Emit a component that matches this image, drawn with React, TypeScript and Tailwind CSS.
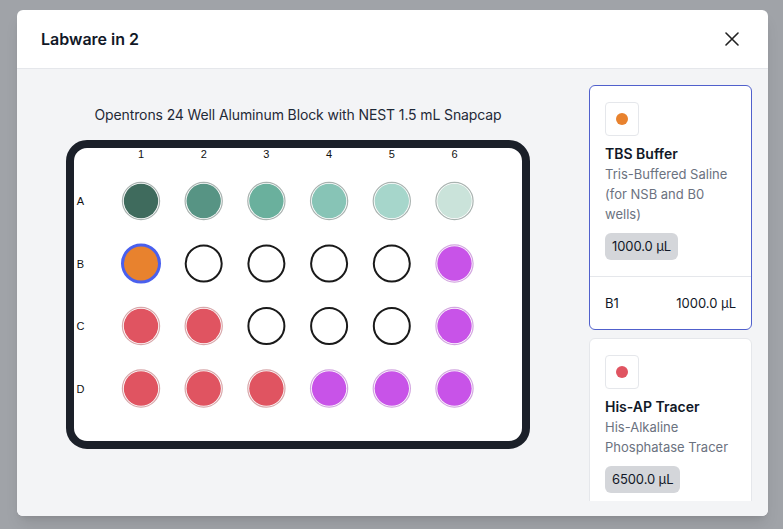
import React from "react";

type Well = { fill?: string; ring?: string; selected?: boolean };

const GREENS = ["#3f6b5d", "#579484", "#6ab09d", "#87c4b6", "#a6d6cb", "#cae3da"];
const ORANGE = "#e8822e";
const RED = "#e05461";
const PURPLE = "#c853e8";

const rows: Well[][] = [
  GREENS.map((g) => ({ fill: g, ring: "#a9b3b0" })),
  [
    { fill: ORANGE, selected: true },
    {},
    {},
    {},
    {},
    { fill: PURPLE, ring: "#d3a7e0" },
  ],
  [
    { fill: RED, ring: "#d8a8ab" },
    { fill: RED, ring: "#d8a8ab" },
    {},
    {},
    {},
    { fill: PURPLE, ring: "#d3a7e0" },
  ],
  [
    { fill: RED, ring: "#d8a8ab" },
    { fill: RED, ring: "#d8a8ab" },
    { fill: RED, ring: "#d8a8ab" },
    { fill: PURPLE, ring: "#d3a7e0" },
    { fill: PURPLE, ring: "#d3a7e0" },
    { fill: PURPLE, ring: "#d3a7e0" },
  ],
];

const CX = [75, 137.7, 200.4, 263.1, 325.8, 388.5];
const CY = [61, 123.5, 186, 248.5];
const ROWS = ["A", "B", "C", "D"];

function Plate() {
  return (
    <svg width="464" height="309" viewBox="0 0 464 309" className="block">
      <rect x="4" y="4" width="456" height="301" rx="17" fill="#ffffff" stroke="#1b2029" strokeWidth="8" />
      {CX.map((x, i) => (
        <text
          key={"c" + i}
          x={x}
          y={18}
          textAnchor="middle"
          fontSize="11"
          fontFamily="'Liberation Sans', Arial, sans-serif"
          fill="#111"
        >
          {i + 1}
        </text>
      ))}
      {ROWS.map((r, i) => (
        <text
          key={"r" + i}
          x={14.5}
          y={CY[i] + 4}
          textAnchor="middle"
          fontSize="11"
          fontFamily="'Liberation Sans', Arial, sans-serif"
          fill="#111"
        >
          {r}
        </text>
      ))}
      {rows.map((row, ri) =>
        row.map((w, ci) => {
          const cx = CX[ci];
          const cy = CY[ri];
          if (!w.fill) {
            return <circle key={ri + "-" + ci} cx={cx} cy={cy} r={18} fill="#fff" stroke="#1a1a1a" strokeWidth="2" />;
          }
          if (w.selected) {
            return (
              <g key={ri + "-" + ci}>
                <circle cx={cx} cy={cy} r={18.5} fill={w.fill} stroke="#4a60ee" strokeWidth="3" />
              </g>
            );
          }
          return (
            <g key={ri + "-" + ci}>
              <circle cx={cx} cy={cy} r={18.6} fill="#fff" stroke={w.ring} strokeWidth="1.2" />
              <circle cx={cx} cy={cy} r={17.2} fill={w.fill} />
            </g>
          );
        })
      )}
    </svg>
  );
}

function Card({
  color,
  title,
  desc,
  volume,
  active,
  children,
}: {
  color: string;
  title: string;
  desc: string;
  volume: string;
  active?: boolean;
  children?: React.ReactNode;
}) {
  return (
    <div
      className={
        "shrink-0 rounded-md bg-white border " + (active ? "border-[#5060cc]" : "border-[#e5e7eb]")
      }
    >
      <div className="px-[15px] pt-4 pb-4">
        <div className="w-[34px] h-[34px] rounded-[4px] border border-[#e5e7eb] flex items-center justify-center bg-white">
          <div className="w-3 h-3 rounded-full" style={{ backgroundColor: color }} />
        </div>
        <div className="mt-2 text-[14px] leading-5 font-semibold text-[#111827]">{title}</div>
        <div className="text-[13px] leading-5 text-[#6b7280]">{desc}</div>
        <div className="mt-[9px] inline-flex h-[27px] items-center rounded-md bg-[#d4d6da] px-[7px] text-[13px] tracking-[-0.1px] text-[#111827]">
          {volume}
        </div>
      </div>
      {children}
    </div>
  );
}

export default function App() {
  return (
    <div
      className="w-[783px] h-[529px] bg-[#a0a3a8] pt-[10px] pl-[17px]"
      style={{ fontFamily: "Inter, 'Noto Sans', sans-serif" }}
    >
      <div className="w-[751px] h-[506px] rounded-md bg-white overflow-hidden shadow-lg flex flex-col">
        <div className="h-[59px] shrink-0 flex items-center justify-between px-6 border-b border-[#e5e7eb]">
          <div className="text-[16px] font-semibold text-[#111827]">Labware in 2</div>
          <svg width="14" height="14" viewBox="0 0 14 14" className="mr-[5px]">
            <path d="M1 1L13 13M13 1L1 13" stroke="#222" strokeWidth="1.6" strokeLinecap="round" />
          </svg>
        </div>
        <div className="flex flex-1 min-h-0 bg-[#f3f4f6]">
          <div className="flex-1 pl-[49px] pt-[36px]">
            <div className="w-[464px] flex flex-col items-center">
              <div className="text-[14px] leading-5 tracking-[-0.12px] text-[#1f2937]">
                Opentrons 24 Well Aluminum Block with NEST 1.5 mL Snapcap
              </div>
              <div className="mt-[15px]">
                <Plate />
              </div>
            </div>
          </div>
          <div className="w-[163px] mr-[16px] pt-4 pb-[15px] min-h-0">
            <div className="h-full overflow-hidden flex flex-col gap-2">
              <Card
                color={ORANGE}
                title="TBS Buffer"
                desc="Tris-Buffered Saline (for NSB and B0 wells)"
                volume="1000.0 µL"
                active
              >
                <div className="border-t border-[#e5e7eb] px-[15px] py-4 flex justify-between text-[13px] leading-5 text-[#111827]">
                  <span>B1</span>
                  <span>1000.0 µL</span>
                </div>
              </Card>
              <Card
                color={RED}
                title="His-AP Tracer"
                desc="His-Alkaline Phosphatase Tracer"
                volume="6500.0 µL"
              />
            </div>
          </div>
        </div>
      </div>
    </div>
  );
}
